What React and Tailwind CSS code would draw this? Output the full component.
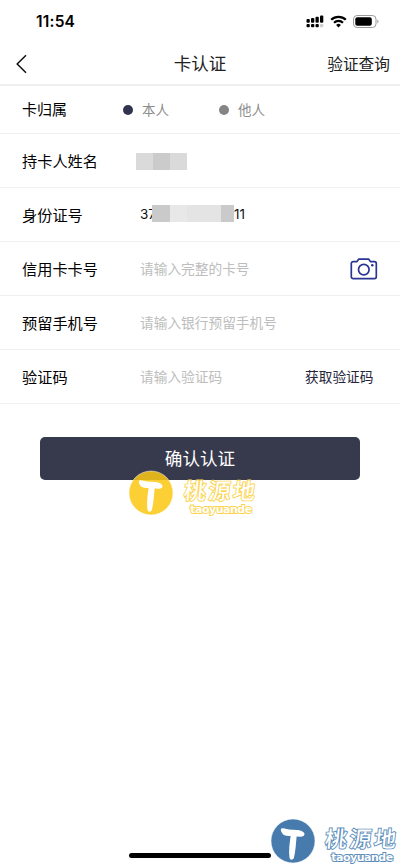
import React, { useState } from 'react';

const fields = [
  { label: '信用卡卡号', placeholder: '请输入完整的卡号', action: 'camera' },
  { label: '预留手机号', placeholder: '请输入银行预留手机号' },
  { label: '验证码', placeholder: '请输入验证码', action: 'code' },
];

const StatusBar = () => (
  <div className="flex h-[43px] items-center justify-between pl-9 pr-[21px]">
    <span className="font-['Inter'] text-[15.5px] font-semibold leading-none tracking-[0.2px] text-black">
      11:54
    </span>
    <div className="flex items-center gap-[6px]">
      <svg width="18" height="13" viewBox="0 0 18 13" fill="#000">
        <rect x="0.5" y="4" width="3.3" height="3.8" rx="1" />
        <rect x="5" y="3" width="3.3" height="4.8" rx="1" />
        <rect x="9.5" y="1.8" width="3.3" height="6" rx="1" />
        <rect x="14" y="0.4" width="3.3" height="7.4" rx="1" />
        <rect x="0.5" y="9" width="3.3" height="3.3" rx="1" />
        <rect x="5" y="9" width="3.3" height="3.3" rx="1" />
        <rect x="9.5" y="9" width="3.3" height="3.3" rx="1" />
        <rect x="14" y="9" width="3.3" height="3.3" rx="1" fill="#ccc" />
      </svg>
      <svg width="17" height="13" viewBox="0 0 17 13" fill="none" stroke="#000">
        <path d="M1.2 4.8a10.4 10.4 0 0 1 14.6 0" strokeWidth="2.3" />
        <path d="M4 7.7a6.4 6.4 0 0 1 9 0" strokeWidth="2.1" />
        <path d="M8.5 12.4 6.1 10a3.4 3.4 0 0 1 4.8 0z" fill="#000" stroke="none" />
      </svg>
      <svg width="26" height="13" viewBox="0 0 26 13">
        <rect x="0.5" y="0.5" width="22.5" height="12" rx="3.6" fill="none" stroke="#999" />
        <rect x="2.3" y="2.3" width="16.5" height="8.4" rx="2" fill="#000" />
        <path d="M24.3 4.6c1.6.6 1.6 3.2 0 3.8z" fill="#999" />
      </svg>
    </div>
  </div>
);

const CameraIcon = () => (
  <svg width="28" height="24" viewBox="0 0 28 24" fill="none" stroke="#283593" strokeWidth="1.7">
    <path
      d="M3.2 4.6H7L8.6 2.2h10.2l1.6 2.4h4a1.9 1.9 0 0 1 1.9 1.9v13.2a1.9 1.9 0 0 1-1.9 1.9H3.2a1.9 1.9 0 0 1-1.9-1.9V6.5a1.9 1.9 0 0 1 1.9-1.9z"
      strokeLinejoin="round"
    />
    <circle cx="13.8" cy="12.6" r="5.3" />
    <circle cx="22.3" cy="8.3" r="1.3" fill="#283593" stroke="none" />
  </svg>
);

const Row = ({ label, children }) => (
  <div className="flex h-[54px] items-center border-b border-[#f0f0f0] pl-[22px]">
    <span className="w-[118px] shrink-0 text-[15.2px] text-black">{label}</span>
    {children}
  </div>
);

const LogoMark = ({ color }) => (
  <svg width="46" height="46" viewBox="0 0 46 46" className="shrink-0">
    <circle cx="23" cy="23" r="22" fill={color} fillOpacity="0.86" stroke="#fff" strokeOpacity="0.5" />
    <path
      d="M11.200 10.800c1.500-1.400 5.600.8 11 1 5.400.2 9.800.400 11.800 3 1.500 2-.6 4-3 3.900l-4.400-.3c-.7 7-.9 14-2.600 21.200-.6 2.700-4 2.900-4.500.2-1-6.600.1-14.400 1.100-21.700-3-.3-5.900-.5-7.400-1.700-1.500-1.200-3-4.600-2-5.600z"
      fill="#fff"
    />
  </svg>
);

const App = () => {
  const [owner, setOwner] = useState('本人');

  return (
    <div className="relative h-[866px] w-[400px] overflow-hidden bg-white font-['Noto_Sans_CJK_SC',sans-serif]">
      <StatusBar />
      <header className="grid h-[43px] grid-cols-[1fr_auto_1fr] items-center border-b-2 border-[#f0f0f0] pl-[15px] pr-[10px]">
        <button aria-label="返回">
          <svg width="13" height="20" viewBox="0 0 13 20" fill="none" stroke="#111" strokeWidth="1.5">
            <path d="M11 1.200 2.200 10 11 18.800" />
          </svg>
        </button>
        <h1 className="-ml-[5px] text-[17.5px] text-[#222]">卡认证</h1>
        <button className="justify-self-end text-[15.7px] text-[#222]">验证查询</button>
      </header>

      <div className="flex h-[48px] items-center border-b border-[#f0f0f0] pl-[22px]">
        <span className="w-[101px] text-[15px] text-black">卡归属</span>
        {['本人', '他人'].map((name) => (
          <button
            key={name}
            onClick={() => setOwner(name)}
            className="flex w-24 items-center gap-[9px] text-[13.5px] text-[#8c8c8c]"
          >
            <span
              className={`size-[10px] rounded-full ${owner === name ? 'bg-[#32334f]' : 'bg-[#858585]'}`}
            />
            {name}
          </button>
        ))}
      </div>

      <Row label="持卡人姓名">
        <div className="-ml-1 mt-px flex h-[17px]">
          <span className="w-[17px] bg-[#dadada]" />
          <span className="w-[17px] bg-[#cbcbcb]" />
          <span className="w-[17px] bg-[#dadada]" />
        </div>
      </Row>
      <Row label="身份证号">
        <div className="flex items-center font-['Inter'] text-[13.5px] text-[#111]">
          <span className="w-3 whitespace-nowrap">37</span>
          <div className="relative -mt-[3px] flex h-[17px]">
            <span className="w-[18px] bg-[#cacaca]" />
            <span className="w-[17px] bg-[#e8e8e8]" />
            <span className="w-[34px] bg-[#e4e4e4]" />
            <span className="w-[13px] bg-[#cacaca]" />
          </div>
          <span>11</span>
        </div>
      </Row>
      {fields.map((field) => (
        <Row key={field.label} label={field.label}>
          <input
            className="w-[165px] shrink-0 text-[13.7px] outline-none placeholder:text-[#bdbdbd]"
            placeholder={field.placeholder}
          />
          {field.action === 'camera' && (
            <button className="ml-[45px]" aria-label="拍照">
              <CameraIcon />
            </button>
          )}
          {field.action === 'code' && (
            <button className="text-[13.7px] text-[#25263c]">获取验证码</button>
          )}
        </Row>
      ))}

      <div className="px-10 pt-[33px]">
        <button className="h-[43px] w-full rounded-[5px] bg-[#37394d] text-[17.6px] text-white">
          确认认证
        </button>
      </div>

      <div className="absolute left-[128px] top-[470px] flex">
        <LogoMark color="#fbc714" />
        <div className="ml-[9px] mt-[5px] w-[76px] text-center text-white [paint-order:stroke_fill] [-webkit-text-stroke:1.8px_#fbd24a]">
          <div className="-skew-x-6 whitespace-nowrap text-[22px] font-medium leading-[28px] tracking-[2.5px]">
            桃源地
          </div>
          <div className="mt-px font-['DejaVu_Sans'] text-[11px] leading-[11px] font-bold tracking-[-0.5px]">
            taoyuande
          </div>
        </div>
      </div>

      <div className="absolute bottom-2 left-[129px] h-[5px] w-[142px] rounded-full bg-black" />

      <div className="absolute left-[270px] top-[818px] flex">
        <LogoMark color="#2965a0" />
        <div className="ml-[8px] mt-[5px] w-[76px] text-center text-white [paint-order:stroke_fill] [-webkit-text-stroke:1.8px_#5a8cba]">
          <div className="-skew-x-6 whitespace-nowrap text-[22px] font-medium leading-[28px] tracking-[2.5px]">
            桃源地
          </div>
          <div className="mt-px font-['DejaVu_Sans'] text-[11px] leading-[11px] font-bold tracking-[-0.5px]">
            taoyuande
          </div>
        </div>
      </div>
    </div>
  );
};

export default App;
